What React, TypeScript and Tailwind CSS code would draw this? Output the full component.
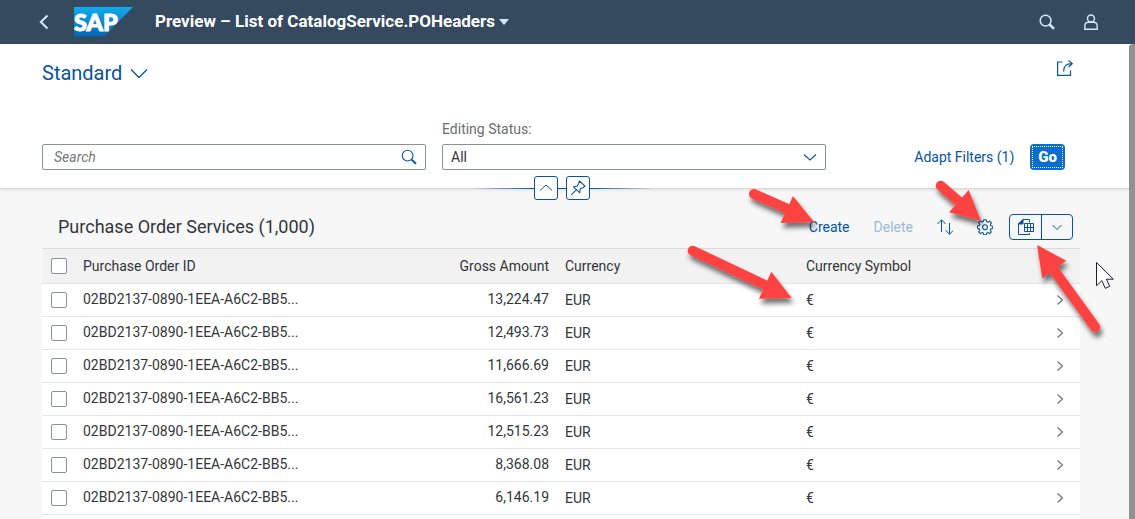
import type { ReactNode } from "react";

const ORDER_ID = "02BD2137-0890-1EEA-A6C2-BB5...";
const AMOUNTS = ["13,224.47", "12,493.73", "11,666.69", "16,561.23", "12,515.23", "8,368.08", "6,146.19"];

function Icon({ size = 16, width = 1, children }: { size?: number; width?: number; children: ReactNode }) {
  return (
    <svg
      width={size}
      height={size}
      viewBox={`0 0 ${size} ${size}`}
      fill="none"
      stroke="currentColor"
      strokeWidth={width}
      aria-hidden="true"
      className="shrink-0"
    >
      {children}
    </svg>
  );
}

function SearchIcon({ bold = false }: { bold?: boolean }) {
  return (
    <Icon width={bold ? 1.5 : 1.1}>
      <circle cx="6.6" cy="6.6" r="5.4" />
      <path d="M10.6 10.6 15 14.8" strokeWidth={bold ? 2.6 : 2} />
    </Icon>
  );
}

function SapLogo() {
  return (
    <svg width="59" height="30" viewBox="0 0 59 30" role="img" aria-label="SAP" className="shrink-0">
      <defs>
        <linearGradient id="sap-fill" x1="0" y1="0" x2="0" y2="1">
          <stop offset="0" stopColor="#10acee" />
          <stop offset="1" stopColor="#0864b4" />
        </linearGradient>
      </defs>
      <path d="M0 0H59L30 29.500H0Z" fill="url(#sap-fill)" />
      <text x="0" y="23.5" fontFamily="Lato, sans-serif" fontWeight="900" fontSize="23.5" fill="#fff" stroke="#fff" strokeWidth="1">
        SAP
      </text>
    </svg>
  );
}

function GearIcon() {
  return (
    <Icon width={1.1}>
      <path
        strokeLinejoin="round"
        d="M6.7 .8h2.600l.4 1.900 1.300.5 1.600-1.100 1.800 1.800-1.100 1.600.5 1.300 1.900.4v2.300l-1.900.4-.5 1.300 1.100 1.600-1.800 1.800-1.600-1.100-1.300.5-.4 1.900H6.700l-.4-1.900-1.300-.5-1.600 1.100-1.800-1.800 1.100-1.600-.5-1.300L.4 9.400V7l1.800-.4.5-1.300-1.100-1.600 1.800-1.800L5 3l1.300-.5Z"
      />
      <circle cx="8" cy="8.200" r="2.400" />
    </Icon>
  );
}

const ARROWS = [
  { line: "M754 194 788 209", head: "M814 222 793 196 780.5 223Z" },
  { line: "M692.7 250.7 765 285", head: "M791.7 298 771.3 271.7 759 298.7Z" },
  { line: "M940.7 185.7 959 201.500", head: "M981 220.7 968.7 190 949 212.3Z" },
  { line: "M1095.300 327.300 1053.500 269.500", head: "M1037 245 1066.3 260.700 1042.3 278.300Z" },
];

function Annotations() {
  return (
    <svg
      width="1135"
      height="519"
      viewBox="0 0 1135 519"
      aria-hidden="true"
      className="pointer-events-none absolute top-0 left-0"
    >
      <defs>
        <filter id="arrow-shadow" x="-20%" y="-20%" width="150%" height="160%">
          <feDropShadow dx="2" dy="5" stdDeviation="2.5" floodColor="#000" floodOpacity="0.55" />
        </filter>
      </defs>
      {ARROWS.map((a) => (
        <g key={a.line} filter="url(#arrow-shadow)">
          <path d={a.line} stroke="#fd4343" strokeWidth="10" strokeLinecap="round" fill="none" />
          <path d={a.head} fill="#fd4343" />
        </g>
      ))}
      <path
        d="M1096.500 262.500V285.700L1101.800 280.700 1105.300 288.300 1109.700 286.300 1106.400 279.200H1113.300Z"
        fill="#fff"
        stroke="#1c1c2c"
        strokeWidth="1"
      />
    </svg>
  );
}

function ShellBar() {
  return (
    <header className="flex h-11 shrink-0 items-center bg-[#354a5f] pr-9 pl-9 text-[#d1e8ff]">
      <button aria-label="Back" className="mr-[22px]">
        <Icon width={2}>
          <path d="M11.500 1.500 4.800 8l6.700 6.500" />
        </Icon>
      </button>
      <SapLogo />
      <button className="ml-[22px] flex items-center gap-1 text-[17px] font-bold text-white">
        Preview – List of CatalogService.POHeaders
        <svg width="10" height="6" viewBox="0 0 10 6" className="text-[#d1e8ff]" aria-hidden="true">
          <path d="M0 0h10L5 6Z" fill="currentColor" />
        </svg>
      </button>
      <div className="ml-auto flex items-center gap-7">
        <button aria-label="Search">
          <SearchIcon bold />
        </button>
        <button aria-label="User profile">
          <Icon width={1.4}>
            <circle cx="8" cy="4.500" r="3.500" />
            <path d="M1.800 15.300v-3C1.800 9.800 3.200 8.300 5.300 8.300h5.400c2.100 0 3.500 1.500 3.500 4v3Z" />
          </Icon>
        </button>
      </div>
    </header>
  );
}

function FilterBar() {
  return (
    <section className="relative border-b border-[#d9d9d9] bg-white pr-[49px] pb-[18px] pl-[42px] shadow-[0_1px_3px_rgba(0,0,0,0.1)]">
      <div className="flex items-start justify-between pt-4 pr-[7px]">
        <button className="flex h-[26px] items-center gap-2 text-xl text-[#0854a0]">
          Standard
          <Icon size={18} width={1.3}>
            <path d="M1 5.500 9 13.500l8-8" />
          </Icon>
        </button>
        <button aria-label="Share" className="text-[#0854a0]">
          <Icon width={1.2}>
            <path d="M5.500 2H.6v13.400h12.900V10.500" />
            <path d="M6.600 11.500C6.600 6.500 9 3.600 15 3.600M11.600.5 15.300 3.600 11.600 7" />
          </Icon>
        </button>
      </div>

      <div className="mt-8 flex items-end gap-4">
        <div className="flex h-[26px] max-w-96 flex-1 items-center rounded-xs border border-[#89919a] pr-2">
          <input
            aria-label="Search"
            placeholder="Search"
            className="min-w-0 flex-1 px-[11px] text-sm italic outline-none placeholder:text-[#74777a]"
          />
          <button aria-label="Run search" className="text-[#0854a0]">
            <SearchIcon />
          </button>
        </div>
        <div className="max-w-96 flex-1">
          <label htmlFor="editing-status" className="mb-1 block text-sm leading-[22px] text-[#6a6d70]">
            Editing Status:
          </label>
          <div className="relative">
            <select
              id="editing-status"
              className="block h-[26px] w-full appearance-none rounded-xs border border-[#89919a] bg-white px-2 text-sm text-[#32363a]"
            >
              <option>All</option>
            </select>
            <span className="pointer-events-none absolute top-[5px] right-2 text-[#0854a0]">
              <Icon width={1.1}>
                <path d="M2 5.500 8 11l6-5.500" />
              </Icon>
            </span>
          </div>
        </div>
        <div className="ml-auto flex items-center gap-4 pr-[15px]">
          <button className="text-sm text-[#0854a0]">Adapt Filters (1)</button>
          <button className="h-[26px] rounded bg-[#0a6ed1] p-0.5 text-[15px] font-black text-white">
            <span className="flex h-full items-center border border-dotted border-white px-[5px]">Go</span>
          </button>
        </div>
      </div>

      <div className="absolute inset-x-0 -bottom-3 z-10 flex items-center justify-center pr-[5px] text-[#0854a0]">
        <span className="h-px w-16 bg-linear-to-l from-[#0854a0] to-transparent" />
        <button aria-label="Collapse header" className="grid size-6 place-items-center rounded-[3px] border border-[#0854a0] bg-white">
          <Icon>
            <path d="M2 10.500 8 5l6 5.500" />
          </Icon>
        </button>
        <span className="h-px w-2 bg-[#0854a0]" />
        <button aria-label="Pin header" className="grid size-6 place-items-center rounded-[3px] border border-[#0854a0] bg-white">
          <Icon width={1.1}>
            <path
              strokeLinejoin="round"
              d="M9.500 1 15 6.200 13.300 7.500 10.300 8.800 9.800 12.800 3.500 6.800 7.300 6 8.800 3.200ZM6.500 9.700 1.200 14.800"
            />
          </Icon>
        </button>
        <span className="h-px w-16 bg-linear-to-r from-[#0854a0] to-transparent" />
      </div>
    </section>
  );
}

function Toolbar() {
  return (
    <div className="flex items-center pt-[25px] pr-[7px] pb-2 pl-4 text-[#0854a0]">
      <h1 className="text-lg leading-6 text-[#32363a]">Purchase Order Services (1,000)</h1>
      <div className="ml-auto flex items-center gap-6 text-sm">
        <button>Create</button>
        <button disabled className="text-[#9cbbd9]">
          Delete
        </button>
        <button aria-label="Sort">
          <Icon width={1}>
            <path d="M4.500 13V1M.5 5l4-4.200 4 4.200M12.500 4v11.300M8.700 11.300l3.800 4 3.800-4" />
          </Icon>
        </button>
        <button aria-label="Settings">
          <GearIcon />
        </button>
      </div>
      <div className="ml-4 flex h-[26px] rounded border border-[#0854a0]">
        <button aria-label="Export to spreadsheet" className="grid w-8 place-items-center border-r border-[#0854a0]">
          <Icon>
            <path d="M11.500 3.500V.5H5L.5 5v10.500h11V14" />
            <path d="M5 .5V5H.5Z" fill="currentColor" />
            <path d="M6.500 4.500h9v8h-9ZM6.500 8.500h9M9.500 4.500v8M12.500 4.500v8" />
          </Icon>
        </button>
        <button aria-label="Export options" className="grid w-[30px] place-items-center">
          <Icon>
            <path d="M3.500 6 8 10.500 12.500 6" />
          </Icon>
        </button>
      </div>
    </div>
  );
}

function Tick({ label }: { label: string }) {
  return (
    <input
      type="checkbox"
      aria-label={label}
      className="ml-[9px] block size-4 appearance-none rounded-xs border border-[#89919a] bg-white"
    />
  );
}

function OrdersTable() {
  return (
    <table className="w-full table-fixed border-separate border-spacing-0 text-left text-sm text-[#32363a]">
      <thead>
        <tr className="h-9 bg-[#f2f2f2] *:border-y *:border-t-[#d9d9d9] *:border-b-[#e5e5e5] *:font-normal">
          <th className="w-[33px] p-0">
            <Tick label="Select all" />
          </th>
          <th className="px-2 py-0">Purchase Order ID</th>
          <th className="px-2 py-0 text-right">Gross Amount</th>
          <th className="px-2 py-0">Currency</th>
          <th className="px-2 py-0">Currency Symbol</th>
          <td className="w-[41px] p-0" />
        </tr>
      </thead>
      <tbody>
        {AMOUNTS.map((amount, i) => (
          <tr key={amount} className="h-[33px] bg-white *:border-b *:border-[#e5e5e5]">
            <td className="p-0">
              <Tick label={`Select row ${i + 1}`} />
            </td>
            <td className="px-2 pt-0 pb-[3px] whitespace-nowrap">{ORDER_ID}</td>
            <td className="px-2 pt-0 pb-[3px] text-right">{amount}</td>
            <td className="px-2 py-0">EUR</td>
            <td className="px-2 py-0">€</td>
            <td className="p-0">
              <button aria-label={`Open row ${i + 1}`} className="ml-[13px] block text-[#6a6d70]">
                <Icon width={1.1}>
                  <path d="M5.500 3.500 10.500 8l-5 4.500" />
                </Icon>
              </button>
            </td>
          </tr>
        ))}
      </tbody>
    </table>
  );
}

export default function App() {
  return (
    <div className="relative flex h-screen flex-col overflow-hidden bg-[#f7f7f7] font-[Roboto,sans-serif]">
      <ShellBar />
      <div className="flex flex-1">
        <main className="flex min-w-0 flex-1 flex-col">
          <FilterBar />
          <div className="mr-[49px] ml-[42px] flex flex-1 flex-col">
            <Toolbar />
            <OrdersTable />
            <div className="flex-1 bg-white" />
          </div>
        </main>
        <div className="w-1.5 rounded-tl bg-[#929292]" />
      </div>
      <Annotations />
    </div>
  );
}
